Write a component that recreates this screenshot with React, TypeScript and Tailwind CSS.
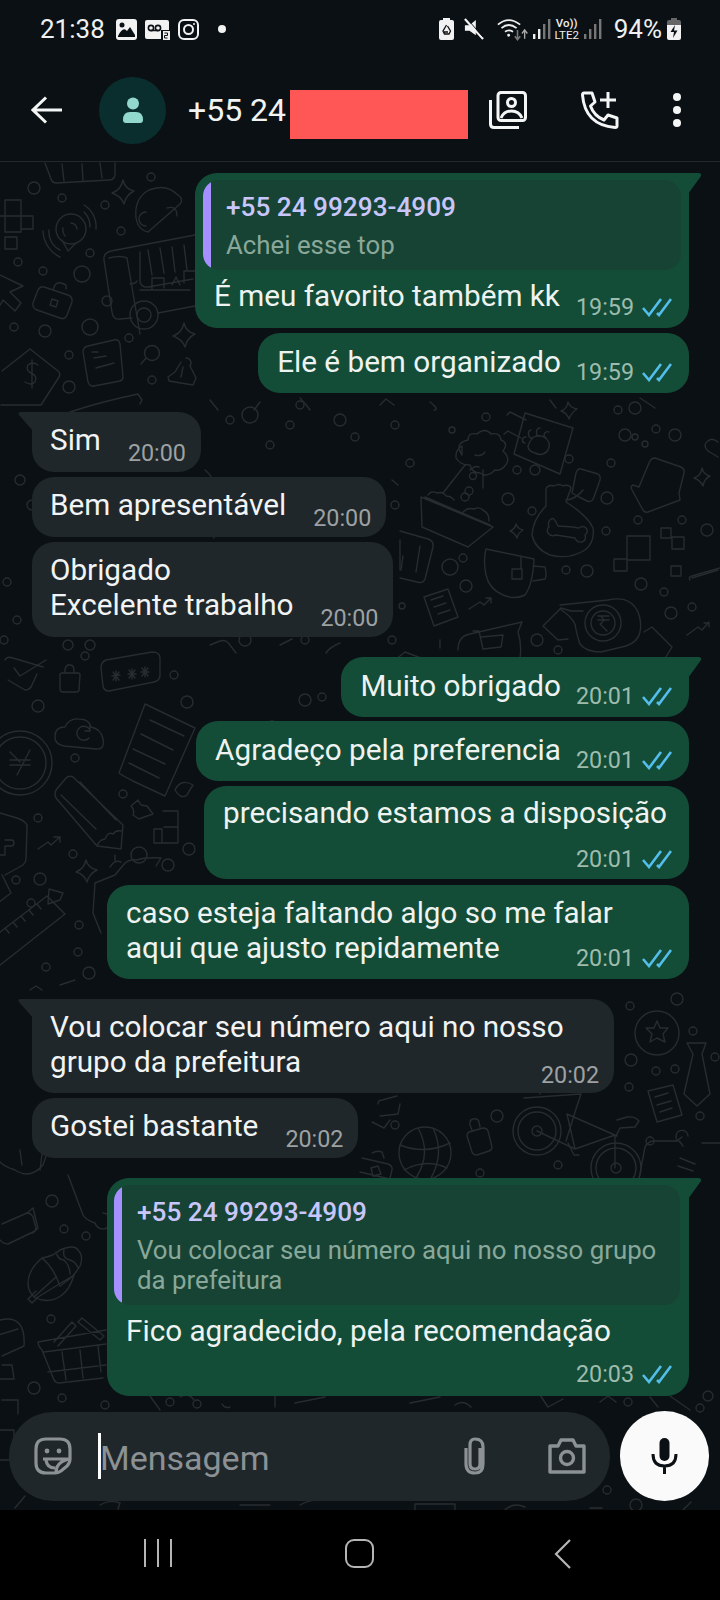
import React from "react";

const Ticks = () => (
  <svg width="30" height="20" viewBox="0 0 30 20" fill="none" stroke="#53bdeb" strokeWidth="2.6" className="shrink-0">
    <path d="M1 11 L7 18 L19 2" />
    <path d="M15 16 L17 18 L29 2" />
  </svg>
);

const Meta = ({ t, out }: { t: string; out?: boolean }) => (
  <div className="flex items-center gap-[8px] h-[26px] shrink-0">
    <span className={out ? "text-[23.3px] leading-[26px] text-[#9dbcae]" : "text-[23.3px] leading-[26px] text-[#9da1a3]"}>{t}</span>
    {out && <Ticks />}
  </div>
);

const TailR = () => (
  <svg width="14" height="22" viewBox="0 0 14 22" className="absolute -right-[13px] top-0">
    <path d="M0 0 H10 Q14 0 13 3 L0 21 Z" fill="#144d37" />
  </svg>
);
const TailL = () => (
  <svg width="15" height="20" viewBox="0 0 15 20" className="absolute -left-[14px] top-0">
    <path d="M15 0 H3 Q-1 0 1 3 L15 19 Z" fill="#1f272a" />
  </svg>
);

const Quote = ({ lines }: { lines: string[] }) => (
  <div className="relative flex overflow-hidden rounded-[16px] bg-[#174335]">
    <div className="w-[8px] bg-[#a68fff] shrink-0" />
    <div className="pl-[15px] pr-[12px] pt-[11px] pb-[10px] flex-1">
      <div className="text-[26.2px] leading-[32px] font-medium text-[#c9c6fb]">+55 24 99293-4909</div>
      <div className="mt-[7px] text-[25.8px] leading-[30px] text-[#89a89a]">
        {lines.map((l) => (
          <div key={l}>{l}</div>
        ))}
      </div>
    </div>
  </div>
);

const Out = ({ text, t, tail, extra }: { text: string; t: string; tail?: boolean; extra?: string }) => (
  <div className={(tail ? "relative self-end mr-[31px] flex items-end gap-[15px] bg-[#144d37] rounded-[22px] rounded-tr-none pl-[19px] pr-[17px] pt-[11px] pb-[8px] " : "relative self-end mr-[31px] flex items-end gap-[15px] bg-[#144d37] rounded-[22px] pl-[19px] pr-[17px] pt-[11px] pb-[8px] ") + (extra ?? "")}>
    {tail && <TailR />}
    <div className="text-[29.7px] leading-[35px] pb-[6px] text-[#eef3f1]">{text}</div>
    <Meta t={t} out />
  </div>
);

const In = ({ lines, t, tail }: { lines: string[]; t: string; tail?: boolean }) => (
  <div className={tail ? "relative self-start ml-[32px] flex items-end gap-[27px] bg-[#1f272a] rounded-[22px] rounded-tl-none pl-[18px] pr-[15px] pt-[10px] pb-[6px]" : "relative self-start ml-[32px] flex items-end gap-[27px] bg-[#1f272a] rounded-[22px] pl-[18px] pr-[15px] pt-[10px] pb-[6px]"}>
    {tail && <TailL />}
    <div className="text-[29.7px] leading-[35px] pb-[9px] text-[#f1f3f4]">
      {lines.map((l) => (
        <div key={l}>{l}</div>
      ))}
    </div>
    <Meta t={t} />
  </div>
);

const Circles = () => {
  const c: [number, number, number][] = [
    [34, 188, 6], [62, 198, 4], [105, 205, 4], [151, 177, 4], [121, 231, 4], [90, 253, 4], [18, 262, 4], [43, 271, 4], [82, 274, 8], [14, 327, 4], [45, 331, 6], [90, 327, 8], [129, 338, 4], [69, 355, 4], [69, 387, 6], [152, 380, 4],
    [486, 417, 4], [452, 430, 3], [535, 470, 5], [410, 463, 4], [517, 470, 4], [469, 491, 4], [465, 497, 4], [508, 499, 6], [532, 511, 4], [569, 459, 4], [611, 463, 4], [625, 435, 6], [635, 437, 3], [675, 435, 6], [645, 444, 3], [656, 429, 4], [618, 410, 4], [635, 408, 6], [607, 498, 6], [638, 520, 4], [682, 520, 4], [707, 530, 6], [606, 531, 4], [450, 567, 8], [463, 558, 4], [466, 586, 6], [566, 570, 4], [587, 571, 6], [641, 584, 6], [664, 592, 4], [671, 613, 6], [692, 607, 4], [537, 640, 6], [558, 650, 4], [402, 606, 3],
    [85, 656, 4], [38, 706, 6], [174, 675, 4], [187, 702, 6], [75, 758, 4], [272, 725, 4], [123, 794, 4], [38, 818, 4], [73, 854, 4], [139, 855, 8], [168, 865, 6], [189, 849, 6], [40, 879, 6], [16, 880, 4], [31, 903, 4], [79, 925, 4], [78, 952, 4], [46, 967, 4], [89, 973, 6], [305, 700, 6], [322, 697, 4],
    [630, 1006, 4], [677, 999, 6], [693, 1031, 4], [631, 1060, 6], [656, 1071, 4], [675, 1069, 4], [629, 1087, 4], [715, 1057, 4], [497, 1116, 6], [395, 1125, 4], [700, 1116, 4], [650, 1141, 4], [558, 1165, 4], [480, 1173, 4], [52, 1201, 6], [64, 1229, 4], [86, 1236, 4], [51, 1319, 4], [34, 1388, 6], [62, 1398, 4], [105, 1405, 4],
    [170, 1402, 4], [197, 1404, 4], [628, 1402, 4], [700, 1408, 4], [708, 1396, 5], [636, 1505, 6], [607, 1490, 4], [20, 480, 5], [32, 505, 5], [7, 582, 4], [17, 620, 4], [4, 640, 4], [68, 645, 5], [90, 645, 5], [250, 415, 8], [300, 405, 4], [270, 445, 4], [290, 425, 4], [230, 420, 4], [245, 640, 6], [305, 640, 4], [340, 420, 6], [355, 437, 4], [395, 425, 4], [395, 505, 4], [392, 640, 4],
  ];
  return <>{c.map(([x, y, r], i) => <circle key={i} cx={x} cy={y} r={r} />)}</>;
};

const Doodles = () => (
  <svg className="absolute inset-0 w-full h-full" viewBox="0 0 720 1348" fill="none" stroke="#272c2f" strokeWidth="1.4" strokeLinecap="round" strokeLinejoin="round">
    <g transform="translate(0,-162)">
      <Circles />
      <path d="M45 163 l6 16 q1 4 6 4 l52 -3 q5 0 6 -5 l0 -12 M62 164 l2 17 M82 164 l1 16 M100 163 l2 15" />
      <path d="M123 180 q2 9 11 11 q-8 4 -10 13 q-3 -8 -12 -11 q9 -3 11 -13Z M184 323 q2 9 11 11 q-8 4 -10 13 q-3 -8 -12 -11 q9 -3 11 -13Z M516 524 q2 5 7 6 q-5 3 -6 8 q-2 -5 -7 -7 q5 -2 6 -7Z M702 468 q2 7 8 8 q-6 3 -7 10 q-3 -6 -9 -8 q7 -2 8 -10Z M86 860 q2 8 11 10 q-8 4 -10 12 q-3 -8 -11 -10 q8 -3 10 -12Z M568 402 q2 6 9 7 q-6 4 -8 10 q-2 -6 -8 -8 q6 -2 7 -9Z" />
      <path d="M5 200 h16 v16 h12 v13 h-12 v-13 h-16 v-16 M5 216 v16 h16 v-16 M-5 216 h10 M5 237 h12 v12 h-12z" />
      <circle cx="71" cy="229" r="15" />
      <path d="M62 240 l6 11 l8 -8 M71 223 a7 7 0 0 1 6 6 M65 236 a10 10 0 0 1 -2 -8 M84 205 a25 25 0 0 1 12 24 M49 230 a20 20 0 0 0 11 20 M43 231 a30 30 0 0 0 17 26 M84 212 a20 20 0 0 1 6 15" />
      <path d="M149 190 q-15 8 -13 28 q2 12 12 14 l32 -28 q4 -5 -2 -9 q-12 -12 -29 -5z M146 212 a7 7 0 0 0 0 14 M167 208 q10 -3 10 8" />
      <path d="M104 260 q-1 -7 7 -9 l84 -16 M104 260 l8 52 q1 8 8 7 l12 -1 M109 258 q12 -3 18 0 l13 76 M140 252 l0 30 q2 6 8 5 l45 -8 M148 250 l4 25 M160 248 l4 25 M172 247 l3 25 M184 245 l3 25 M140 290 h50 M152 290 v-12 h12 v10 M172 285 l4 -8 l4 8 M184 283 v-12 h11 M130 284 q5 0 7 -3 M158 313 l37 -7" />
      <circle cx="144" cy="315" r="14" /><circle cx="144" cy="315" r="7" /><circle cx="107" cy="301" r="5" />
      <path d="M-2 274 l25 12 l-13 6 l11 11 l-6 8 l-12 -11 l-7 12" />
      <path d="M44 287 l24 8 q5 2 4 7 l-5 13 q-2 5 -7 3 l-23 -8 q-5 -2 -4 -7 l5 -13 q2 -4 6 -3z M53 290 l2 -5 q2 -3 6 -2 l3 1 q3 1 2 5 M52 299 l6 2 l-2 6 l-6 -2z" />
      <path d="M88 346 l26 -6 q5 -1 6 4 l3 33 q0 3 -3 4 l-26 5 q-4 1 -6 -4 l-5 -30 q0 -5 5 -6z M92 352 h6 M94 358 l12 -2 M96 368 l18 -5" />
      <circle cx="152" cy="353" r="7.5" /><path d="M146 358 l-5 6" />
      <path d="M30 349 l28 22 q3 3 1 6 l-18 28 l-40 0 M30 349 l-28 22" />
      <path d="M38 365 q-6 -4 -10 0 q-3 5 3 8 q7 3 4 9 q-4 4 -10 0 M32 360 v28" />
      <path d="M186 358 a5 5 0 0 1 4 8 l6 12 -3 7 -24 -4 -1 -4 7 -5 6 -10 M183 367 l-2 10" />
      <path d="M70 412 q30 -10 68 -18 l4 6 l-2 4" />
      <path d="M525 413 l48 15 l-13 46 l-46 -20z M510 412 l16 8 M508 431 l13 7 M510 412 l-3 3 M508 431 l-4 3" />
      <path d="M528 446 q5 -14 16 -9 q8 5 4 13 q-5 7 -13 3 q-7 -2 -7 -7z M526 437 a3 3 0 0 0 -1 6 M531 430 a3 4 0 0 0 1 8 M540 428 a3 4 0 0 0 -1 8 M549 432 a3 3 0 0 0 -3 6" />
      <path d="M462 455 q-8 -12 6 -15 q0 -8 9 -6 q8 -7 14 0 q9 -2 10 6 q8 3 2 11 q9 8 1 16 q-4 4 -9 3 q-8 8 -15 3 q-8 0 -10 -8 q-10 0 -14 -7 q-1 -8 6 -12 z M465 465 l-22 28 M483 470 v18 M470 470 q5 -5 9 -3 M485 452 q-4 5 -10 3" />
      <circle cx="473" cy="476" r="3.5" />
      <path d="M421 497 l72 30 l-25 20 l-46 -20z M425 497 l65 28 M428 495 q3 -5 9 -2 q6 -2 9 3 q5 0 8 4 M463 512 q5 -5 11 -3 q6 -3 10 2 q5 2 5 10" />
      <path d="M546 489 q2 -5 8 -3 q5 -3 9 0 q6 -2 8 2 l-5 14 q22 14 27 26 q2 14 -8 22 q-16 10 -35 5 q-15 -6 -18 -20 q1 -16 14 -29z" />
      <path d="M557 524 q-3 -7 -6 -5 q-4 3 -2 8 q-3 3 -1 6 q3 4 8 2 l19 3 q2 5 7 4 q5 -2 3 -7 q4 -3 1 -7 q-3 -3 -7 0 q-2 0 -6 -1 l-15 -1 z" />
      <path d="M581 469 l17 5 q3 2 2 6 l-6 17 q-2 6 -7 4 l-8 -4 -7 -4 4 -20 q2 -5 5 -4z M566 500 q10 -1 17 -10" />
      <path d="M655 458 l26 9 q4 2 3 6 l-5 20 l1 7 l-32 12 q-3 1 -5 -2 l-11 -20 q-2 -4 1 -5 l6 2 l10 -24 q2 -5 6 -5z" />
      <path d="M627 536 h23 v24 h-23z M614 559 h13 v12 h-13z M661 528 h10 v10 h-10z M672 537 h12 v12 h-12z M671 566 h10 v10 h-10z M692 578 l26 -8" />
      <path d="M690 580 q-2 -3 2 -4 l28 -8 M718 442 q-6 -5 -10 -1 q-6 4 0 10 l10 6" />
      <path d="M486 549 l48 10 q-1 25 -9 36 q-10 5 -22 0 q-14 -6 -17 -20 q-3 -14 0 -26z M521 556 v13 M512 569 h10 v10 h-10z M533 566 l12 1 q2 8 0 12 l-12 2" />
      <path d="M400 531 l28 8 q6 2 5 8 l-8 32 q-2 5 -8 3 l-17 -4 M403 556 l-2 14 M420 546 l-4 26" />
      <path d="M424 597 l24 -8 l10 28 l-24 9z M431 600 l12 -4 M434 607 l12 -4 M438 614 l12 -4" />
      <path d="M469 609 l11 -7 l4 3 l7 -7 M486 598 h5 v5 M687 635 l11 -8 l4 3 l7 -8 M704 623 h5 v4" />
      <path d="M561 608 l-18 18 l15 14 l10 -1 M561 608 l10 3 h12 M560 605 l48 -5 q22 -5 30 12 q4 10 2 20 q-2 10 -14 14 l-25 6 q-15 0 -21 -8 q-3 -8 -5 -20 q-4 -8 -15 -15" />
      <circle cx="603" cy="623" r="18" /><circle cx="603" cy="623" r="12" />
      <path d="M598 616 h11 M598 620 h11 M600 616 q7 4 0 8 l7 7 M644 632 l8 -5 l20 20 l-6 10" />
      <path d="M458 650 q0 -14 12 -16 l52 -12 l-4 10 q4 12 2 26 M473 631 h6 l4 18 l18 -2 l2 -12 l-22 2" />
      <path d="M5 660 q2 -4 8 -2 l30 9 M14 668 l6 8 l26 -16 M8 680 l17 10 q4 0 6 -3 l6 -13" />
      <path d="M62 673 h16 q2 0 2 2 l-1 15 q0 2 -3 2 h-13 q-3 0 -3 -3 v-14 q0 -2 2 -2z M65 673 v-4 q2 -5 5 -4 q4 0 4 5 v3" />
      <path d="M106 660 l46 -8 q8 0 8 6 l0 18 q-1 5 -6 6 l-45 9 q-5 0 -6 -5 l-2 -18 q0 -6 5 -8z M112 676 l8 -1 M116 671 v10 M113 672 l6 8 M119 672 l-6 8 M128 674 h8 M132 669 v10 M129 670 l6 8 M135 670 l-6 8 M141 672 h8 M145 667 v10 M142 668 l6 8 M148 668 l-6 8" />
      <path d="M64 746 q-10 -2 -9 -10 q0 -9 10 -9 q4 -9 14 -8 q10 0 12 8 q10 2 12 12 q2 11 -7 10 z M90 730 a7 7 0 1 0 -1 8 M90 725 v6 h-5" />
      <path d="M145 704 l50 24 l-30 68 l-30 -14 q-12 -6 -16 -9 z M150 720 l34 16 M141 734 l32 16 M133 749 l32 15 M129 763 l30 15 M175 790 q6 -12 18 -5 q-4 6 -6 10 q-6 5 -12 -5z" />
      <circle cx="20" cy="763" r="32" /><circle cx="20" cy="763" r="26" />
      <path d="M10 760 h20 M10 765 h20 M30 750 l-13 25 M10 752 l10 10" />
      <path d="M73 777 l50 48 l-2 24 l-24 -3 l-41 -48 q-2 -4 0 -8 l10 -12 q3 -3 7 -1z M61 795 l35 34 M80 782 l36 38 M97 846 q2 -6 8 -7 q3 -8 8 -5 q3 -4 8 -3" />
      <path d="M-3 812 l20 6 q11 4 10 9 l-1 32 q0 3 -3 6 l-18 10 M5 840 h6 a3 3 0 0 1 0 6 h-6 v9 h-6" />
      <path d="M38 849 l10 -7 l3 3 l9 -8 M54 837 h6 v5" />
      <path d="M138 800 l3 5 l6 1 l6 8 l-6 2 l-8 3 l-6 -4 q2 -5 -2 -9 z M163 811 h15 v32 h-16 v-14 h-8 v14 h8 M164 827 h14" />
      <path d="M115 875 l10 -12 q5 -4 12 -3 q8 -3 24 -2 l-5 8 M115 875 l-20 8 l-2 30 l8 20 M115 855 v6 M110 867 q5 -8 11 -5" />
      <path d="M63 893 l-14 -4 l-1 15 l12 -4z" />
      <path d="M-5 936 l52 -40 l18 18 l-70 55 M5 928 l4 5 M13 922 l4 5 M21 916 l4 5 M29 910 l4 5 M37 904 l4 5" />
      <path d="M-5 905 l16 -12 l-9 -18" />
      <path d="M30 990 l6 -4 l6 4 M60 985 l15 -5" />
      <circle cx="657" cy="1033" r="22" />
      <path d="M657 1021 l3 7 l8 0 l-5 6 l2 8 l-8 -4 l-7 4 l2 -8 l-6 -6 l8 0z" />
      <path d="M687 1043 h19 l-4 11 l8 40 l-13 12 l-13 -12 l9 -40z" />
      <path d="M648 1091 l25 -6 l9 30 l-25 7z M655 1097 l13 -4 M657 1105 l14 -4 M660 1112 l12 -4" />
      <path d="M682 1137 l-5 4 l-25 0 q-5 2 -7 6 l-6 32 M683 1146 l-3 -4 a6 6 0 1 1 8 -6 M702 1143 l18 0 M680 1158 l15 6 M678 1166 l15 5" />
      <circle cx="537" cy="1131" r="24" /><circle cx="537" cy="1131" r="19" /><circle cx="537" cy="1131" r="5" />
      <circle cx="616" cy="1168" r="25" /><circle cx="616" cy="1168" r="20" /><circle cx="616" cy="1168" r="5" />
      <path d="M537 1131 l38 18 l40 -14 v33 M575 1149 l-8 -35 l50 22 M617 1120 l10 -3 q8 -1 12 4 l-4 6 l-15 1 l-4 8 M524 1098 l57 -4 l-5 15 l-10 32 M568 1143 l6 12 h5 M540 1094 l0 -6" />
      <circle cx="425" cy="1153" r="26" />
      <path d="M400 1145 q25 10 50 -2 M404 1170 q22 -12 43 -2 M418 1128 q14 25 -2 50 M433 1128 q12 25 -2 50" />
      <path d="M469 1132 l14 -4 q4 0 5 3 l4 16 q0 3 -3 4 l-12 4 q-4 0 -5 -3 l-5 -16 q0 -3 2 -4z M472 1130 l-2 -5 q-1 -5 3 -6 q5 -1 6 3 l1 5" />
      <path d="M390 1120 l-6 8 l-12 -6 M378 1104 q0 -4 4 -4 l15 -4 M380 1116 l18 -2 l2 -10" />
      <path d="M362 1158 l26 6 q5 2 4 6 l-3 12 M372 1153 q5 -3 10 -1 l2 6 M378 1166 l3 8 l-8 2 l-2 -8z M360 1172 l34 8" />
      <path d="M42 1258 q12 -2 18 -8 q14 -6 18 0 q6 6 2 16 q-6 10 -12 14 l-8 6 q-6 -18 -18 -28z M42 1258 q-14 12 -14 25 q0 8 6 14 l22 -20 M34 1297 q15 8 28 -2 q8 -6 12 -20 l-36 22 l-6 6 l-4 -4 l8 -8 M56 1252 q2 8 8 8 q6 6 6 14 M64 1250 q-2 8 6 10 q6 2 8 8" />
      <path d="M38 1342 l68 -12 M38 1342 q0 4 4 8 l12 30 q2 3 5 3 l44 -5 M44 1352 l62 -8 M48 1372 l58 -7 M62 1352 l4 28 M80 1350 l3 28 M98 1346 l3 26 M54 1342 l18 -20 l4 4 l-18 20 M78 1322 l4 -4 l22 18 l-4 4z" />
      <path d="M2 1224 l25 -11 q4 0 6 4 l3 11 q0 3 -3 4 l-25 12 q-5 0 -8 -4 M27 1213 l6 -5 l5 20 l-5 5" />
      <path d="M0 1162 q5 5 15 8 q15 10 28 -5 l6 -18 M22 1165 l-2 -15 M40 1170 l2 -16" />
      <path d="M0 1320 q26 -6 24 26 l-22 10 M-2 1335 l20 -6" />
      <path d="M2 1365 h10 l2 14 h-14 M2 1400 h16 v14" />
      <path d="M68 1175 l15 40 q3 5 12 8 M95 1223 a8 8 0 1 0 8 -10" />
      <path d="M210 400 l8 10 M260 402 l-6 8 M300 398 q6 6 10 12 M380 405 l6 -6 l8 6 M430 402 q10 8 4 8 M640 398 l15 10 M550 400 l6 8" />
      <path d="M210 645 l10 -4 q6 -2 10 4 l6 8 M280 645 l12 -6 M340 643 q-10 4 -14 10" />
      <path d="M205 470 q10 8 6 14 M392 480 l6 5 M204 532 q8 -3 10 6 M395 660 l10 -8 l16 6 M400 540 v30 M440 640 v8" />
      <path d="M60 1500 q8 -8 14 -2 M150 1396 l10 14 M180 1397 q8 -5 14 3 M222 1404 q3 5 8 3 M275 1395 v12 M295 1403 l30 -6 M410 1403 l30 -6 M455 1405 q8 -6 16 2 M540 1395 l8 12 l15 -8 M600 1402 l8 -6 l8 6 M650 1397 l8 10 M670 1396 l20 14" />
      <path d="M0 1430 h14 v30 h-14 M15 1508 l10 -12 M100 1505 q10 -6 20 -2 l-2 6 M240 1505 h30 M300 1505 q10 -6 25 -5 M415 1510 v-6 h40 v6 M505 1510 q8 -8 20 -3 M590 1508 h12 M683 1510 l8 -8" />
    </g>
  </svg>
);

const StatusLeft = () => (
  <div className="flex items-center">
    <span className="text-[26px] leading-[30px] text-[#eef0f1] w-[76px]">21:38</span>
    <svg width="21" height="21" viewBox="0 0 21 21" className="mr-[8px]">
      <rect width="21" height="21" rx="3" fill="#f2f2f2" />
      <circle cx="6" cy="6" r="2.5" fill="#0b1014" />
      <path d="M2 17 Q7 7 11 12 L14 8 L19 16 V18 H2Z" fill="#0b1014" />
    </svg>
    <svg width="25" height="21" viewBox="0 0 25 21" className="mr-[8px]">
      <rect y="1" width="24" height="19" rx="2" fill="#f2f2f2" />
      <circle cx="6" cy="9" r="2.6" fill="none" stroke="#0b1014" strokeWidth="1.6" />
      <circle cx="13" cy="9" r="2.6" fill="none" stroke="#0b1014" strokeWidth="1.6" />
      <path d="M6 11.5 H13" stroke="#0b1014" strokeWidth="1.5" />
      <rect x="16" y="11" width="9" height="10" fill="#0b1014" />
      <rect x="18" y="12" width="7" height="9" fill="#eee" />
      <path d="M19.5 14 h3 v2.5 h-3 v2.5 h3" fill="none" stroke="#0b1014" strokeWidth="1" />
    </svg>
    <svg width="21" height="21" viewBox="0 0 21 21" fill="none" stroke="#f2f2f2" strokeWidth="2" className="mr-[19px]">
      <rect x="1" y="1" width="19" height="19" rx="5" />
      <circle cx="10.5" cy="10.5" r="4.5" />
      <circle cx="16" cy="5" r="1" fill="#f2f2f2" stroke="none" />
    </svg>
    <span className="w-[8px] h-[8px] rounded-full bg-[#f2f2f2]" />
  </div>
);

const Bars = ({ first }: { first: string }) => (
  <svg width="19" height="20" viewBox="0 0 19 20">
    <rect x="1" y="15" width="2.4" height="5" fill={first} />
    <rect x="6" y="10" width="2.4" height="10" fill={first} />
    <rect x="11" y="5" width="2.4" height="15" fill="#777" />
    <rect x="16" y="0" width="2.4" height="20" fill="#777" />
  </svg>
);

const StatusRight = () => (
  <div className="flex items-center">
    <svg width="15" height="22" viewBox="0 0 15 22" className="mr-[10px]">
      <path d="M4 0 H11 V2 H13 Q15 2 15 4 V20 Q15 22 13 22 H2 Q0 22 0 20 V4 Q0 2 2 2 H4Z" fill="#f2f2f2" />
      <path d="M7.5 7 L4 13 L5.5 16 H10 L11.5 13 L8.5 8 M5 14 H9" fill="none" stroke="#0b1014" strokeWidth="1.3" />
    </svg>
    <svg width="20" height="24" viewBox="0 0 22 24" className="mr-[13px]">
      <path d="M1 8 H6 L13 2 V19 L6 14 H1Z" fill="#f2f2f2" />
      <path d="M1 1 L21 23" stroke="#f2f2f2" strokeWidth="2.4" />
      <path d="M2.6 3 L19 22" stroke="#0b1014" strokeWidth="1" transform="translate(2,-1)" />
    </svg>
    <svg width="33" height="27" viewBox="0 0 37 27" fill="none" stroke="#eee" strokeWidth="2" className="mr-[2px]">
      <path d="M1 8 Q13 -2 26 8" />
      <path d="M5 12 Q13 5 22 12" />
      <path d="M9 16 Q13 13 18 16" />
      <circle cx="13" cy="20" r="1.6" fill="#eee" stroke="none" />
      <path d="M23 14 V24 M20 21 L23 25 L26 21" stroke="#777" strokeWidth="1.8" />
      <path d="M31 24 V15 M28 18 L31 14 L34 18" stroke="#aaa" strokeWidth="1.5" />
    </svg>
    <div className="mr-[3px]"><Bars first="#eee" /></div>
    <div className="flex flex-col items-center text-[#eee] w-[26px] mr-[3px]">
      <span className="text-[11.5px] leading-[12px] font-medium">Vo))</span>
      <span className="text-[11.5px] leading-[12px]">LTE2</span>
    </div>
    <div className="mr-[12px]"><Bars first="#777" /></div>
    <span className="text-[26px] leading-[30px] text-[#eef0f1] mr-[5px]">94%</span>
    <svg width="14" height="22" viewBox="0 0 14 22">
      <path d="M4 0 H10 V2 H12 Q14 2 14 4 V7 H0 V4 Q0 2 2 2 H4Z" fill="#666" />
      <path d="M0 7 H14 V20 Q14 22 12 22 H2 Q0 22 0 20Z" fill="#f2f2f2" />
      <path d="M8 7 L3.5 14 H7 L6 20 L10.5 12.5 H7Z" fill="#0b1014" />
    </svg>
  </div>
);

const Header = () => (
  <div className="h-[162px] shrink-0 bg-[#0b1014] border-b border-[#22282b] relative z-10">
    <div className="flex items-center justify-between h-[56px] pl-[40px] pr-[39px] pt-[2px]">
      <StatusLeft />
      <StatusRight />
    </div>
    <div className="flex items-center h-[68px] mt-[20px] pl-[31px]">
      <svg width="31" height="28" viewBox="0 0 31 28" fill="none" stroke="#f4f5f5" strokeWidth="3">
        <path d="M15 1.5 L2 14 L15 26.5 M2.5 14 H31" />
      </svg>
      <div className="w-[67px] h-[67px] rounded-full bg-[#0a2e2e] ml-[37px] flex items-center justify-center">
        <svg width="22" height="28" viewBox="0 0 22 28" fill="#93d8cc">
          <circle cx="11" cy="7.5" r="6" />
          <path d="M1 24 Q1 16 8 16 H14 Q21 16 21 24 Q21 27 18 27 H4 Q1 27 1 24Z" />
        </svg>
      </div>
      <span className="ml-[22px] text-[32px] leading-[36px] text-[#f2f3f3] whitespace-nowrap">+55 24</span>
      <div className="w-[178px] h-[49px] bg-[#ff5656] ml-[4px] mt-[8px]" />
      <svg width="38" height="38" viewBox="0 0 38 38" fill="none" stroke="#f4f5f5" strokeWidth="3" strokeLinejoin="round" className="ml-[21px]">
        <rect x="9" y="1.5" width="27.5" height="28" rx="3" />
        <circle cx="22.5" cy="11.5" r="4" />
        <path d="M12 27 Q15 20 22.5 20 Q30 20 33 27" strokeWidth="3" />
        <path d="M1.5 9 V33 Q1.5 36.5 5 36.5 H30" />
      </svg>
      <svg width="38" height="38" viewBox="0 0 38 38" fill="none" stroke="#f4f5f5" strokeWidth="3" strokeLinejoin="round" className="ml-[54px]">
        <path d="M3 2 H11 L14 11 L9.5 15 Q13 25 23 29 L27 24 L36 27 V35 Q36 36.5 34 36.5 Q4 34 1.5 4 Q1.5 2 3 2Z" />
        <path d="M27 1 V17 M19 9 H35" />
      </svg>
      <div className="ml-[54px] flex flex-col gap-[5px]">
        <span className="block w-[8px] h-[8px] rounded-full bg-[#f4f5f5]" />
        <span className="block w-[8px] h-[8px] rounded-full bg-[#f4f5f5]" />
        <span className="block w-[8px] h-[8px] rounded-full bg-[#f4f5f5]" />
      </div>
    </div>
  </div>
);

const InputBar = () => (
  <div className="relative flex items-center pl-[9px] pb-[9px] mt-auto">
    <div className="flex items-center w-[601px] h-[89px] rounded-[44px] bg-[#1f272a]">
      <svg width="38" height="38" viewBox="0 0 38 38" fill="none" stroke="#8b9194" strokeWidth="3.2" className="ml-[25px]">
        <path d="M12 2 H26 Q36 2 36 12 V22 Q36 26 33 29 L27 34 Q24 36 21 36 H12 Q2 36 2 26 V12 Q2 2 12 2Z" />
        <circle cx="13" cy="14" r="2.4" fill="#8b9194" stroke="none" />
        <circle cx="25" cy="14" r="2.4" fill="#8b9194" stroke="none" />
        <path d="M9 22 H35 Q26 24 23 30 Q22 34 22 36" />
        <path d="M12 23 Q13 31 21 31" />
      </svg>
      <div className="ml-[26px] w-[3px] h-[46px] bg-white" />
      <span className="ml-[-1px] pt-[3px] text-[34px] leading-[46px] text-[#8b9194]">Mensagem</span>
      <svg width="26" height="40" viewBox="0 0 26 40" fill="none" stroke="#8b9194" strokeWidth="3.2" className="ml-[193px]">
        <path d="M18 12 V28 Q18 33 13 33 Q8 33 8 28 V9 Q8 3 13 3 Q21 3 21 11 V28 Q21 37 13 37 Q4 37 4 28 V12" />
      </svg>
      <svg width="38" height="36" viewBox="0 0 38 36" fill="none" stroke="#8b9194" strokeWidth="3.4" className="ml-[60px]">
        <path d="M2 8 H10 L13 2 H25 L28 8 H36 V34 H2Z" strokeLinejoin="round" />
        <circle cx="19" cy="20" r="6.5" />
      </svg>
    </div>
    <div className="ml-[10px] w-[89px] h-[90px] rounded-full bg-[#fafafa] flex items-center justify-center">
      <svg width="27" height="36" viewBox="0 0 27 36" fill="none" stroke="#0b1014" strokeWidth="3">
        <rect x="8.5" y="0" width="10" height="23" rx="5" fill="#0b1014" stroke="none" />
        <path d="M2 16 Q2 28 13.5 28 Q25 28 25 16 M13.5 28 V36" />
      </svg>
    </div>
  </div>
);

const NavBar = () => (
  <div className="h-[90px] shrink-0 bg-black relative z-10 flex items-start pt-[29px]">
    <div className="ml-[144px] flex gap-[11px]">
      <span className="block w-[2px] h-[28px] bg-[#b5b5b5]" />
      <span className="block w-[2px] h-[28px] bg-[#b5b5b5]" />
      <span className="block w-[2px] h-[28px] bg-[#b5b5b5]" />
    </div>
    <div className="ml-[173px] w-[29px] h-[29px] rounded-[9px] border-2 border-[#b5b5b5]" />
    <svg width="18" height="30" viewBox="0 0 18 30" fill="none" stroke="#b5b5b5" strokeWidth="2.2" className="ml-[180px]">
      <path d="M16 1 L2 15 L16 29" />
    </svg>
  </div>
);

export default function App() {
  return (
    <div className="relative w-[720px] h-[1600px] flex flex-col overflow-hidden bg-[#0b1014] font-['Roboto',sans-serif]">
      <Header />
      <div className="relative flex-1 flex flex-col min-h-0">
        <Doodles />
        <div className="relative flex flex-col gap-[20px] pt-[11px]">
          <div className="flex flex-col gap-[5px]">
            <div className="relative self-end mr-[31px] w-[494px] bg-[#144d37] rounded-[22px] rounded-tr-none pl-[8px] pr-[8px] pt-[7px] pb-[8px]">
              <TailR />
              <Quote lines={["Achei esse top"]} />
              <div className="flex items-end justify-between mt-[8px] pl-[11px] pr-[9px]">
                <div className="text-[29.7px] leading-[35px] pb-[7px] text-[#eef3f1]">É meu favorito também kk</div>
                <Meta t="19:59" out />
              </div>
            </div>
            <Out text="Ele é bem organizado" t="19:59" />
          </div>
          <div className="flex flex-col gap-[5px] -mt-[1px]">
            <In lines={["Sim"]} t="20:00" tail />
            <In lines={["Bem apresentável"]} t="20:00" />
            <In lines={["Obrigado", "Excelente trabalho"]} t="20:00" />
          </div>
          <div className="flex flex-col gap-[5px]">
            <Out text="Muito obrigado" t="20:01" tail />
            <Out text="Agradeço pela preferencia" t="20:01" extra="-mt-[1px]" />
            <div className="self-end mr-[31px] w-[485px] flex flex-col bg-[#144d37] rounded-[22px] pl-[19px] pr-[17px] pt-[9px] pb-[7px]">
              <div className="text-[29.7px] leading-[35px] text-[#eef3f1] mb-[16px]">precisando estamos a disposição</div>
              <div className="self-end"><Meta t="20:01" out /></div>
            </div>
            <div className="self-end mr-[31px] mt-[1px] w-[582px] flex flex-col bg-[#144d37] rounded-[22px] pl-[19px] pr-[17px] pt-[11px] pb-[8px]">
              <div className="text-[29.6px] leading-[35px] text-[#eef3f1] pb-[5px]">
                <div>caso esteja faltando algo so me falar</div>
                <div>aqui que ajusto repidamente</div>
              </div>
              <div className="self-end -mt-[26px]"><Meta t="20:01" out /></div>
            </div>
          </div>
          <div className="flex flex-col gap-[5px]">
            <div className="relative self-start ml-[32px] w-[582px] flex flex-col bg-[#1f272a] rounded-[22px] rounded-tl-none pl-[18px] pr-[15px] pt-[10px] pb-[5px]">
              <TailL />
              <div className="text-[29.7px] leading-[35px] text-[#f1f3f4] pb-[9px]">
                <div>Vou colocar seu número aqui no nosso</div>
                <div>grupo da prefeitura</div>
              </div>
              <div className="self-end -mt-[26px]"><Meta t="20:02" /></div>
            </div>
            <In lines={["Gostei bastante"]} t="20:02" />
          </div>
          <div className="relative self-end mr-[31px] w-[582px] bg-[#144d37] rounded-[22px] rounded-tr-none pl-[7px] pr-[9px] pt-[7px] pb-[9px]">
            <TailR />
            <Quote lines={["Vou colocar seu número aqui no nosso grupo", "da prefeitura"]} />
            <div className="mt-[8px] pl-[12px] text-[29.7px] leading-[35px] text-[#eef3f1]">Fico agradecido, pela recomendação</div>
            <div className="flex justify-end pr-[8px] mt-[13px]"><Meta t="20:03" out /></div>
          </div>
        </div>
        <InputBar />
      </div>
      <NavBar />
    </div>
  );
}
